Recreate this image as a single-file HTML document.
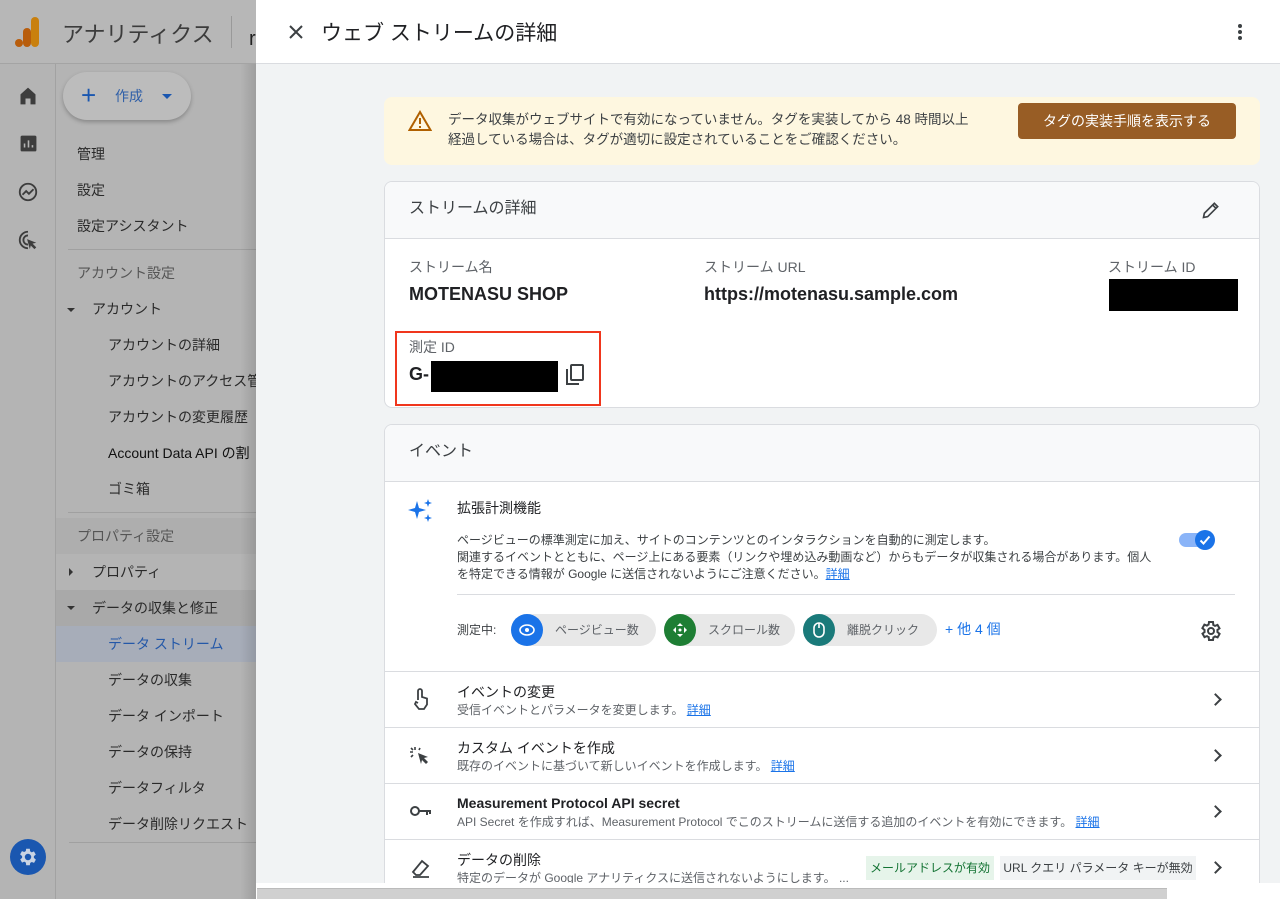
<!DOCTYPE html>
<html style="width:1280px;height:899px;overflow:hidden"><head><meta charset="utf-8"><style>
*{margin:0;padding:0;box-sizing:border-box}
body{width:1280px;height:899px;overflow:hidden;font-family:"Liberation Sans","Noto Sans CJK JP",sans-serif;background:#b4b4b4;position:relative;color:#202124}
.a{position:absolute;white-space:nowrap}
.side{color:#2a2a2a;font-size:14px}
.card{position:absolute;left:384px;width:876px;background:#fff;border:1px solid #dadce0;border-radius:8px;overflow:hidden}
.lnk{color:#1a73e8;text-decoration:underline}
.sub{font-size:12px;color:#5f6368}
.chev{position:absolute;width:9px;height:9px;border-right:2px solid #3c4043;border-top:2px solid #3c4043;transform:rotate(45deg)}
</style></head><body>
<div class="a" style="left:0;top:0;width:256px;height:64px;background:#b7b7b7;border-bottom:1px solid #a4a4a4"></div>
<svg class="a" style="left:15px;top:16px" width="28" height="32"><rect x="16" y="1" width="8" height="30" rx="4" fill="#c9800e"/><rect x="8" y="12" width="8" height="19" rx="4" fill="#b85d0c"/><circle cx="4" cy="27" r="4" fill="#b85d0c"/></svg>
<div class="a" style="left:62px;top:17px;font-size:22px;color:#3c3c3c">アナリティクス</div>
<div class="a" style="left:231px;top:16px;width:1px;height:32px;background:#999"></div>
<div class="a" style="left:249px;top:28px;font-size:20px;color:#222">r</div>
<div class="a" style="left:55px;top:64px;width:1px;height:835px;background:#a2a2a2"></div>
<svg class="a" style="left:18px;top:86px" width="20" height="20" viewBox="0 0 24 24"><path d="M3 10l9-8 9 8v12h-6v-7h-6v7H3z" fill="#3d3d3d"/></svg>
<svg class="a" style="left:19px;top:134px" width="19" height="19" viewBox="0 0 24 24"><rect x="2" y="2" width="20" height="20" rx="2" fill="#3d3d3d"/><path d="M7 17v-5M12 17V8M17 17v-3" stroke="#b4b4b4" stroke-width="2"/></svg>
<svg class="a" style="left:17px;top:181px" width="22" height="22" viewBox="0 0 24 24"><circle cx="12" cy="12" r="9" fill="none" stroke="#3d3d3d" stroke-width="2"/><path d="M6 15l4-4 3 3 5-5" fill="none" stroke="#3d3d3d" stroke-width="2"/></svg>
<svg class="a" style="left:17px;top:229px" width="22" height="22" viewBox="0 0 24 24"><path d="M12 3a9 9 0 1 0 0 18M12 7a5 5 0 1 0 0 10" fill="none" stroke="#3d3d3d" stroke-width="2"/><path d="M11 11l10 4-4 1 4 4-2 2-4-4-1 4z" fill="#3d3d3d"/></svg>
<div class="a" style="left:63px;top:72px;width:128px;height:48px;border-radius:24px;background:#bcbcbc;box-shadow:0 2px 4px rgba(0,0,0,.25)"></div>
<div class="a" style="left:81px;top:80px;font-size:26px;color:#1a57b0;line-height:30px">+</div>
<div class="a" style="left:115px;top:86px;font-size:14px;color:#2f5fa8">作成</div>
<div class="a" style="left:162px;top:94px;width:0;height:0;border-left:5px solid transparent;border-right:5px solid transparent;border-top:5px solid #1a57b0"></div>
<div class="a side" style="left:77px;top:144px">管理</div>
<div class="a side" style="left:77px;top:180px">設定</div>
<div class="a side" style="left:77px;top:216px">設定アシスタント</div>
<div class="a" style="left:68px;top:249px;width:188px;height:1px;background:#a0a0a0"></div>
<div class="a side" style="left:77px;top:263px;color:#555">アカウント設定</div>
<div class="a" style="left:67px;top:308px;border-left:4px solid transparent;border-right:4px solid transparent;border-top:4px solid #333"></div>
<div class="a side" style="left:92px;top:299px">アカウント</div>
<div class="a side" style="left:108px;top:335px">アカウントの詳細</div>
<div class="a side" style="left:108px;top:371px">アカウントのアクセス管</div>
<div class="a side" style="left:108px;top:407px">アカウントの変更履歴</div>
<div class="a side" style="left:108px;top:443px;color:#111">Account Data API の割</div>
<div class="a side" style="left:108px;top:479px">ゴミ箱</div>
<div class="a" style="left:68px;top:512px;width:188px;height:1px;background:#a0a0a0"></div>
<div class="a" style="left:56px;top:518px;width:200px;height:36px;background:#aeaeae"></div>
<div class="a side" style="left:77px;top:526px;color:#555">プロパティ設定</div>
<div class="a" style="left:69px;top:568px;border-top:4px solid transparent;border-bottom:4px solid transparent;border-left:4px solid #333"></div>
<div class="a side" style="left:92px;top:562px">プロパティ</div>
<div class="a" style="left:56px;top:590px;width:200px;height:36px;background:#a9a9a9"></div>
<div class="a" style="left:67px;top:606px;border-left:4px solid transparent;border-right:4px solid transparent;border-top:4px solid #333"></div>
<div class="a side" style="left:92px;top:598px">データの収集と修正</div>
<div class="a" style="left:56px;top:626px;width:200px;height:36px;background:#a7adb9"></div>
<div class="a side" style="left:108px;top:634px;color:#2458a8">データ ストリーム</div>
<div class="a side" style="left:108px;top:670px">データの収集</div>
<div class="a side" style="left:108px;top:706px">データ インポート</div>
<div class="a side" style="left:108px;top:742px">データの保持</div>
<div class="a side" style="left:108px;top:778px">データフィルタ</div>
<div class="a side" style="left:108px;top:814px">データ削除リクエスト</div>
<div class="a" style="left:69px;top:842px;width:187px;height:1px;background:#a0a0a0"></div>
<div class="a" style="left:10px;top:839px;width:36px;height:36px;border-radius:50%;background:#1a57b0"></div>
<svg class="a" style="left:17px;top:846px" width="22" height="22" viewBox="0 0 24 24"><path fill="#c9d3e3" d="M19.4 13a7.5 7.5 0 0 0 0-2l2.1-1.6-2-3.5-2.5 1a7 7 0 0 0-1.7-1L15 3h-4l-.4 2.6a7 7 0 0 0-1.7 1l-2.5-1-2 3.5L6.6 11a7.5 7.5 0 0 0 0 2l-2.1 1.6 2 3.5 2.5-1a7 7 0 0 0 1.7 1L11 21h4l.4-2.6a7 7 0 0 0 1.7-1l2.5 1 2-3.5zM13 15.5a3.5 3.5 0 1 1 0-7 3.5 3.5 0 0 1 0 7z" transform="translate(-1 0)"/></svg>
<div class="a" style="left:240px;top:64px;width:16px;height:835px;background:linear-gradient(90deg,rgba(0,0,0,0),rgba(0,0,0,.12))"></div>

<div class="a" style="left:256px;top:0;width:1024px;height:899px;background:#f1f3f4;overflow:hidden">
<div class="a" style="left:0;top:0;width:1024px;height:64px;background:#fff;border-bottom:1px solid #dadce0"></div>
</div>
<svg class="a" style="left:287px;top:23px" width="18" height="18" viewBox="0 0 18 18"><path d="M3 3l12 12M15 3L3 15" stroke="#3c4043" stroke-width="2"/></svg>
<div class="a" style="left:321px;top:17px;font-size:21px;color:#202124">ウェブ ストリームの詳細</div>
<div class="a" style="left:1238px;top:24px;width:4px;height:4px;border-radius:2px;background:#3c4043;box-shadow:0 6px 0 #3c4043,0 12px 0 #3c4043"></div>

<div class="a" style="left:384px;top:97px;width:876px;height:68px;background:#fef7e0;border-radius:8px"></div>
<svg class="a" style="left:408px;top:110px" width="24" height="22" viewBox="0 0 24 22"><path d="M12 2L1.5 20h21z" fill="none" stroke="#b06000" stroke-width="2"/><path d="M12 8v6M12 16v2" stroke="#b06000" stroke-width="2"/></svg>
<div class="a" style="left:448px;top:110px;font-size:13.5px;color:#3c4043;line-height:20px">データ収集がウェブサイトで有効になっていません。タグを実装してから 48 時間以上<br>経過している場合は、タグが適切に設定されていることをご確認ください。</div>
<div class="a" style="left:1018px;top:103px;width:218px;height:36px;background:#985d25;border-radius:4px;color:#fff;font-size:14px;text-align:center;line-height:36px">タグの実装手順を表示する</div>

<div class="card" style="top:181px;height:227px">
 <div style="height:57px;background:#f8f9fa;border-bottom:1px solid #dadce0"></div>
</div>
<div class="a" style="left:409px;top:199px;font-size:16px;color:#3c4043;line-height:20px">ストリームの詳細</div>
<svg class="a" style="left:1201px;top:200px" width="20" height="20" viewBox="0 0 24 24"><path d="M3 21l1-5L16 4l4 4L8 20z M14 6l4 4" fill="none" stroke="#3c4043" stroke-width="2"/></svg>
<div class="a" style="left:409px;top:257px;font-size:14px;color:#5f6368">ストリーム名</div>
<div class="a" style="left:409px;top:284px;font-size:18px;font-weight:bold;color:#202124">MOTENASU SHOP</div>
<div class="a" style="left:704px;top:257px;font-size:14px;color:#5f6368">ストリーム URL</div>
<div class="a" style="left:704px;top:284px;font-size:18px;font-weight:bold;color:#202124">https://motenasu.sample.com</div>
<div class="a" style="left:1108px;top:257px;font-size:14px;color:#5f6368">ストリーム ID</div>
<div class="a" style="left:1109px;top:279px;width:129px;height:32px;background:#000"></div>
<div class="a" style="left:395px;top:331px;width:206px;height:75px;border:2px solid #f0361d"></div>
<div class="a" style="left:409px;top:337px;font-size:14px;color:#5f6368">測定 ID</div>
<div class="a" style="left:409px;top:364px;font-size:18px;font-weight:bold">G-</div>
<div class="a" style="left:431px;top:361px;width:127px;height:31px;background:#000"></div>
<svg class="a" style="left:564px;top:363px" width="22" height="24" viewBox="0 0 22 24"><rect x="7" y="2" width="12" height="15" rx="1" fill="none" stroke="#3c4043" stroke-width="2"/><path d="M3 6v15h12" fill="none" stroke="#3c4043" stroke-width="2"/></svg>

<div class="card" style="top:424px;height:470px">
 <div style="height:57px;background:#f8f9fa;border-bottom:1px solid #dadce0"></div>
</div>
<div class="a" style="left:409px;top:442px;font-size:16px;color:#3c4043;line-height:20px">イベント</div>
<svg class="a" style="left:408px;top:498px" width="26" height="26" viewBox="0 0 26 26"><path d="M9 3l2 7 7 2-7 2-2 7-2-7-7-2 7-2z" fill="#1a73e8"/><path d="M20 1l1 3 3 1-3 1-1 3-1-3-3-1 3-1zM20 16l1 3 3 1-3 1-1 3-1-3-3-1 3-1z" fill="#1a73e8"/></svg>
<div class="a" style="left:457px;top:498px;font-size:14px;color:#202124">拡張計測機能</div>
<div class="a" style="left:457px;top:532px;font-size:12px;color:#3c4043;line-height:17px">ページビューの標準測定に加え、サイトのコンテンツとのインタラクションを自動的に測定します。<br>関連するイベントとともに、ページ上にある要素（リンクや埋め込み動画など）からもデータが収集される場合があります。個人<br>を特定できる情報が Google に送信されないようにご注意ください。<span class="lnk">詳細</span></div>
<div class="a" style="left:1179px;top:533px;width:30px;height:14px;border-radius:7px;background:#8ab4f8"></div>
<div class="a" style="left:1195px;top:530px;width:20px;height:20px;border-radius:50%;background:#1a73e8"></div>
<svg class="a" style="left:1195px;top:530px" width="20" height="20" viewBox="0 0 20 20"><path d="M5.5 10.5l3 3 6-7" fill="none" stroke="#fff" stroke-width="2"/></svg>
<div class="a" style="left:457px;top:594px;width:778px;height:1px;background:#dadce0"></div>
<div class="a" style="left:457px;top:621px;font-size:12px;color:#3c4043">測定中:</div>
<div class="a" style="left:511px;top:614px;width:145px;height:32px;border-radius:16px;background:#e8e8e8"></div>
<div class="a" style="left:511px;top:614px;width:32px;height:32px;border-radius:16px;background:#1a73e8"></div>
<svg class="a" style="left:518px;top:621px" width="18" height="18" viewBox="0 0 18 18"><ellipse cx="9" cy="9" rx="7" ry="5" fill="none" stroke="#fff" stroke-width="1.6"/><circle cx="9" cy="9" r="2" fill="#fff"/></svg>
<div class="a" style="left:555px;top:621px;font-size:12px;color:#5f6368">ページビュー数</div>
<div class="a" style="left:664px;top:614px;width:131px;height:32px;border-radius:16px;background:#e8e8e8"></div>
<div class="a" style="left:664px;top:614px;width:32px;height:32px;border-radius:16px;background:#1e7e34"></div>
<svg class="a" style="left:671px;top:621px" width="18" height="18" viewBox="0 0 18 18"><path d="M9 2l3 3H6zM9 16l3-3H6zM2 9l3-3v6zM16 9l-3-3v6z" fill="#fff"/><circle cx="9" cy="9" r="1.5" fill="#fff"/></svg>
<div class="a" style="left:708px;top:621px;font-size:12px;color:#5f6368">スクロール数</div>
<div class="a" style="left:803px;top:614px;width:134px;height:32px;border-radius:16px;background:#e8e8e8"></div>
<div class="a" style="left:803px;top:614px;width:32px;height:32px;border-radius:16px;background:#1a7a7a"></div>
<svg class="a" style="left:810px;top:620px" width="18" height="20" viewBox="0 0 18 20"><rect x="4" y="3" width="10" height="14" rx="5" fill="none" stroke="#fff" stroke-width="1.6"/><path d="M9 3v5" stroke="#fff" stroke-width="1.6"/></svg>
<div class="a" style="left:847px;top:621px;font-size:12px;color:#5f6368">離脱クリック</div>
<div class="a" style="left:945px;top:619px;font-size:14px;color:#1a73e8">+ 他 4 個</div>
<svg class="a" style="left:1199px;top:619px" width="24" height="24" viewBox="0 0 24 24"><path fill="none" stroke="#3c4043" stroke-width="2" d="M19.4 13a7.5 7.5 0 0 0 0-2l2.1-1.6-2-3.5-2.5 1a7 7 0 0 0-1.7-1L15 3h-4l-.4 2.6a7 7 0 0 0-1.7 1l-2.5-1-2 3.5L6.6 11a7.5 7.5 0 0 0 0 2l-2.1 1.6 2 3.5 2.5-1a7 7 0 0 0 1.7 1L11 21h4l.4-2.6a7 7 0 0 0 1.7-1l2.5 1 2-3.5z" transform="translate(-1 0)"/><circle cx="12" cy="12" r="3" fill="none" stroke="#3c4043" stroke-width="2"/></svg>

<div class="a" style="left:385px;top:671px;width:874px;height:1px;background:#dadce0"></div>
<svg class="a" style="left:411px;top:687px" width="20" height="24" viewBox="0 0 20 24"><path d="M7 13V4a2 2 0 0 1 4 0v6l5 1.5v6L13 22H8l-4-5 1-2 2 1" fill="none" stroke="#3c4043" stroke-width="1.8"/></svg>
<div class="a" style="left:457px;top:682px;font-size:14px">イベントの変更</div>
<div class="a sub" style="left:457px;top:701px">受信イベントとパラメータを変更します。 <span class="lnk">詳細</span></div>
<div class="chev" style="left:1211px;top:695px"></div>
<div class="a" style="left:385px;top:727px;width:874px;height:1px;background:#dadce0"></div>
<svg class="a" style="left:408px;top:745px" width="24" height="22" viewBox="0 0 24 22"><path d="M10 8l10 4-4 1 4 4-2 2-4-4-1 4z" fill="#3c4043"/><path d="M7 2v3M2 7h3M3 3l2 2M3 12l2-2M12 3l-1 2" stroke="#3c4043" stroke-width="1.6"/></svg>
<div class="a" style="left:457px;top:738px;font-size:14px">カスタム イベントを作成</div>
<div class="a sub" style="left:457px;top:757px">既存のイベントに基づいて新しいイベントを作成します。 <span class="lnk">詳細</span></div>
<div class="chev" style="left:1211px;top:751px"></div>
<div class="a" style="left:385px;top:783px;width:874px;height:1px;background:#dadce0"></div>
<svg class="a" style="left:409px;top:803px" width="24" height="16" viewBox="0 0 24 16"><circle cx="6" cy="8" r="4" fill="none" stroke="#3c4043" stroke-width="2"/><path d="M10 8h12M18 8v4M21 8v3" stroke="#3c4043" stroke-width="2"/></svg>
<div class="a" style="left:457px;top:795px;font-size:14px;font-weight:bold">Measurement Protocol API secret</div>
<div class="a sub" style="left:457px;top:813px">API Secret を作成すれば、Measurement Protocol でこのストリームに送信する追加のイベントを有効にできます。 <span class="lnk">詳細</span></div>
<div class="chev" style="left:1211px;top:807px"></div>
<div class="a" style="left:385px;top:839px;width:874px;height:1px;background:#dadce0"></div>
<svg class="a" style="left:409px;top:856px" width="24" height="24" viewBox="0 0 24 24"><path d="M4 16l9-11 6 5-8 9H7z M4 21h16" fill="none" stroke="#3c4043" stroke-width="1.8"/></svg>
<div class="a" style="left:457px;top:850px;font-size:14px">データの削除</div>
<div class="a sub" style="left:457px;top:869px">特定のデータが Google アナリティクスに送信されないようにします。 ...</div>
<div class="a" style="left:866px;top:856px;width:128px;height:24px;background:#e6f4ea;color:#137333;font-size:12px;text-align:center;line-height:24px">メールアドレスが有効</div>
<div class="a" style="left:1000px;top:856px;width:196px;height:24px;background:#f1f3f4;color:#3c4043;font-size:12px;text-align:center;line-height:24px">URL クエリ パラメータ キーが無効</div>
<div class="chev" style="left:1211px;top:863px"></div>
<div class="a" style="left:256px;top:883px;width:1024px;height:16px;background:#fff"></div>
<div class="a" style="left:257px;top:888px;width:910px;height:11px;background:#d0d0d0;border-top:1px solid #bbb"></div>
</body></html>
